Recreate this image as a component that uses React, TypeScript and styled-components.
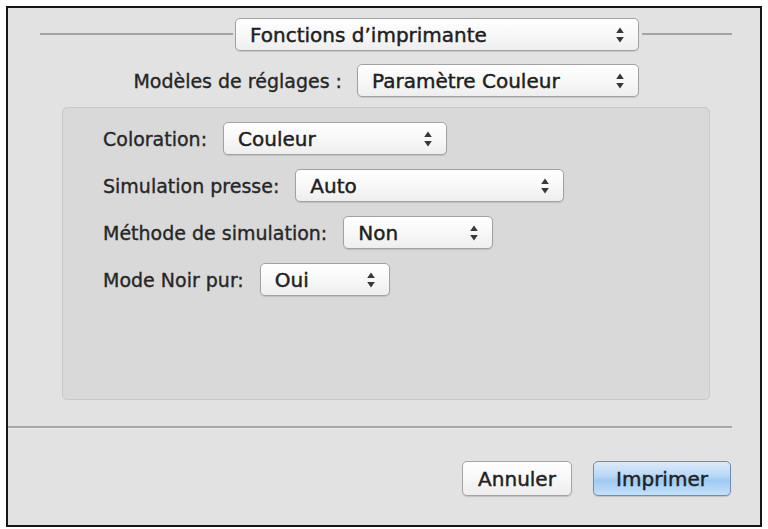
import React from 'react';
import styled, {createGlobalStyle} from 'styled-components';

const GlobalStyle = createGlobalStyle`
  html, body {
    margin: 0;
    padding: 0;
    background: #ffffff;
  }
  body {
    font-family: "DejaVu Sans", "Liberation Sans", sans-serif;
    color: #222;
  }
`;

interface PopupProps {
  value: string;
  width: number;
}

const settings = [
  {label: 'Coloration:', value: 'Couleur', width: 224},
  {label: 'Simulation presse:', value: 'Auto', width: 269},
  {label: 'Méthode de simulation:', value: 'Non', width: 150},
  {label: 'Mode Noir pur:', value: 'Oui', width: 130},
];

export default function App() {
  return (
    <>
      <GlobalStyle/>
      <Page>
        <Window>
          <Header>
            <Rule $w={193}/>
            <Popup value="Fonctions d’imprimante" width={404}/>
            <Rule/>
          </Header>

          <PresetRow>
            <Label>Modèles de réglages :</Label>
            <Popup value="Paramètre Couleur" width={282}/>
          </PresetRow>

          <Panel>
            {settings.map(({label, value, width}) => (
              <SettingRow key={label}>
                <Label>{label}</Label>
                <Popup value={value} width={width}/>
              </SettingRow>
            ))}
          </Panel>

          <Separator/>

          <Buttons>
            <Button>Annuler</Button>
            <Button $primary>Imprimer</Button>
          </Buttons>
        </Window>
      </Page>
    </>
  );
}

function Popup({value, width}: PopupProps) {
  return (
    <PopupBox $w={width}>
      <PopupText>{value}</PopupText>
      <Arrows width="8" height="16" viewBox="0 0 8 16">
        <path d="M4 0.5 L7.8 6 L0.2 6 Z" fill="#383838"/>
        <path d="M0.2 10 L7.8 10 L4 15.5 Z" fill="#383838"/>
      </Arrows>
    </PopupBox>
  );
}

const Page = styled.div`
  padding: 6px 0 0 6px;
`;

const Window = styled.div`
  box-sizing: border-box;
  width: 756px;
  height: 521px;
  border: 2px solid #161616;
  background: #e2e2e2;
  display: flex;
  flex-direction: column;
`;

const Header = styled.div`
  display: flex;
  align-items: center;
  padding: 10px 28px 0 32px;
  gap: 2px;
`;

const Rule = styled.div<{$w?: number}>`
  height: 2px;
  background: #a3a3a3;
  ${p => p.$w ? `width: ${p.$w}px;` : 'flex: 1; margin-left: 1px;'}
  margin-top: -2px;
`;

const PresetRow = styled.div`
  display: flex;
  align-items: center;
  justify-content: flex-end;
  gap: 15px;
  padding: 13px 121px 0 0;
`;

const Label = styled.span`
  font-size: 19px;
  color: #262626;
  white-space: nowrap;
  -webkit-text-stroke: 0.35px #262626;
`;

const PopupBox = styled.div<{$w: number}>`
  box-sizing: border-box;
  width: ${p => p.$w}px;
  height: 33px;
  display: flex;
  align-items: center;
  justify-content: space-between;
  padding: 0 14px 0 14px;
  border: 1px solid #a2a2a2;
  border-radius: 5px;
  background: linear-gradient(to bottom, #ffffff 0%, #f8f8f8 50%, #eeeeee 100%);
  box-shadow: 0 1px 1px rgba(0, 0, 0, 0.12);
`;

const PopupText = styled.span`
  font-size: 20px;
  color: #1e1e1e;
  white-space: nowrap;
  -webkit-text-stroke: 0.45px #1e1e1e;
`;

const Arrows = styled.svg`
  flex: none;
`;

const Panel = styled.div`
  box-sizing: border-box;
  height: 293px;
  margin: 10px 50px 0 54px;
  padding: 14px 0 0 40px;
  background: #d9d9d9;
  border: 1px solid #c9c9c9;
  border-radius: 5px;
  display: flex;
  flex-direction: column;
  gap: 14px;
`;

const SettingRow = styled.div`
  display: flex;
  align-items: center;
  gap: 16px;
`;

const Separator = styled.div`
  height: 2px;
  margin: 26px 28px 0 0;
  background: #a8a8a8;
  border-bottom: 1px solid #ececec;
`;

const Buttons = styled.div`
  display: flex;
  justify-content: flex-end;
  gap: 21px;
  padding: 32px 29px 0 0;
`;

const Button = styled.button<{$primary?: boolean}>`
  box-sizing: border-box;
  height: 35px;
  min-width: ${p => p.$primary ? 138 : 110}px;
  padding: 0 14px;
  font-family: "DejaVu Sans", "Liberation Sans", sans-serif;
  font-size: 20px;
  color: #222;
  -webkit-text-stroke: 0.45px #222;
  border-radius: 5px;
  border: 1px solid ${p => p.$primary ? '#6e8eb8' : '#a4a4a4'};
  background: ${p => p.$primary
    ? 'linear-gradient(to bottom, #dcebfa 0%, #b6d6f5 45%, #9ecaf2 55%, #c4e1fb 100%)'
    : 'linear-gradient(to bottom, #ffffff 0%, #f7f7f7 50%, #ededed 100%)'};
  box-shadow: 0 1px 1px rgba(0, 0, 0, 0.15);
`;
